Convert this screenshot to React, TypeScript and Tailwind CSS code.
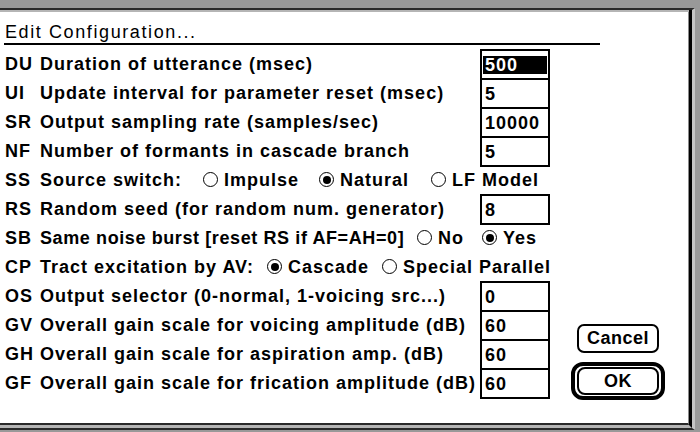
import React from 'react';

type Option = { label: string; on: boolean; width?: number };

type Row =
  | { kind: 'field'; code: string; label: string; value: string; selected?: boolean }
  | { kind: 'radio'; code: string; label: string; labelWidth: number; tight?: boolean; options: Option[] };

const rows: Row[] = [
  { kind: 'field', code: 'DU', label: 'Duration of utterance (msec)', value: '500', selected: true },
  { kind: 'field', code: 'UI', label: 'Update interval for parameter reset (msec)', value: '5' },
  { kind: 'field', code: 'SR', label: 'Output sampling rate (samples/sec)', value: '10000' },
  { kind: 'field', code: 'NF', label: 'Number of formants in cascade branch', value: '5' },
  {
    kind: 'radio',
    code: 'SS',
    label: 'Source switch:',
    labelWidth: 163,
    options: [
      { label: 'Impulse', on: false, width: 116 },
      { label: 'Natural', on: true, width: 112 },
      { label: 'LF Model', on: false },
    ],
  },
  { kind: 'field', code: 'RS', label: 'Random seed (for random num. generator)', value: '8' },
  {
    kind: 'radio',
    code: 'SB',
    label: 'Same noise burst [reset RS if AF=AH=0]',
    labelWidth: 377,
    tight: true,
    options: [
      { label: 'No', on: false, width: 65 },
      { label: 'Yes', on: true },
    ],
  },
  {
    kind: 'radio',
    code: 'CP',
    label: 'Tract excitation by AV:',
    labelWidth: 227,
    options: [
      { label: 'Cascade', on: true, width: 115 },
      { label: 'Special Parallel', on: false },
    ],
  },
  { kind: 'field', code: 'OS', label: 'Output selector (0-normal, 1-voicing src...)', value: '0' },
  { kind: 'field', code: 'GV', label: 'Overall gain scale for voicing amplitude (dB)', value: '60' },
  { kind: 'field', code: 'GH', label: 'Overall gain scale for aspiration amp. (dB)', value: '60' },
  { kind: 'field', code: 'GF', label: 'Overall gain scale for frication amplitude (dB)', value: '60' },
];

const RadioDot = ({ on }: { on: boolean }) => (
  <span className="flex h-[15px] w-[15px] shrink-0 items-center justify-center rounded-full border-[1.5px] border-black bg-white">
    {on && <span className="h-[8px] w-[8px] rounded-full bg-black" />}
  </span>
);

const FieldRow = ({ row }: { row: Extract<Row, { kind: 'field' }> }) => (
  <div className="flex h-[29px] items-center">
    <span className="w-[35px] shrink-0">{row.code}</span>
    <span className="w-[440px] shrink-0 whitespace-nowrap">{row.label}</span>
    <div className="flex h-[31px] w-[70px] shrink-0 items-center self-start border-2 border-black bg-white">
      {row.selected ? (
        <span className="mx-[1px] flex h-[18px] flex-1 items-center bg-black pl-[2px] text-white">{row.value}</span>
      ) : (
        <span className="pl-[3px]">{row.value}</span>
      )}
    </div>
  </div>
);

const RadioRow = ({ row }: { row: Extract<Row, { kind: 'radio' }> }) => (
  <div className="flex h-[29px] items-center whitespace-nowrap">
    <span className="w-[35px] shrink-0">{row.code}</span>
    <span className={row.tight ? 'shrink-0 tracking-[0.6px]' : 'shrink-0'} style={{ width: row.labelWidth }}>
      {row.label}
    </span>
    {row.options.map((opt) => (
      <span
        key={opt.label}
        className="flex shrink-0 items-center gap-[6px]"
        style={opt.width ? { width: opt.width } : undefined}
      >
        <RadioDot on={opt.on} />
        <span>{opt.label}</span>
      </span>
    ))}
  </div>
);

export default function App() {
  return (
    <div className="h-[432px] w-[700px] overflow-hidden bg-[#999999] pt-[8px] pr-[5px] pb-[2px]">
      {/* window frame */}
      <div className="h-full border-t-2 border-r-[3px] border-b-2 border-t-[#2a2a2a] border-r-[#c4c4c4] border-b-[#2a2a2a]">
        <div className="h-full border-r-[3px] border-b-[3px] border-r-black border-b-[#b5b5b5] bg-[#b5b5b5] pt-[2px]">
          <div className="h-full border-r border-b-2 border-r-[#8a8a8a] border-b-[#2a2a2a] bg-white pl-[5px] font-['Liberation_Sans',Arial,sans-serif] text-[18px] text-black">
            <div className="pt-[9px] text-[18px] leading-[22px] font-normal tracking-[1.6px]">Edit Configuration...</div>
            <div className="-ml-px h-[2px] w-[596px] bg-black" />

            <div className="mt-[4px] flex">
              <div className="flex flex-col font-bold leading-[22px] tracking-[1px]">
                {rows.map((row) =>
                  row.kind === 'field' ? (
                    <FieldRow key={row.code} row={row} />
                  ) : (
                    <RadioRow key={row.code} row={row} />
                  ),
                )}
              </div>

              <div className="flex flex-1 flex-col items-start pl-[20px] font-bold tracking-[0.5px]">
                <button className="mt-[275px] ml-[6px] flex h-[29px] w-[82px] items-center justify-center rounded-[7px] border-2 border-black bg-white text-[18px]">
                  Cancel
                </button>
                <div className="mt-[9px] rounded-[12px] border-4 border-black px-[2px] py-[1px]">
                  <button className="flex h-[28px] w-[82px] items-center justify-center rounded-[8px] border-2 border-black bg-white text-[18px]">
                    OK
                  </button>
                </div>
              </div>
            </div>
          </div>
        </div>
      </div>
    </div>
  );
}
